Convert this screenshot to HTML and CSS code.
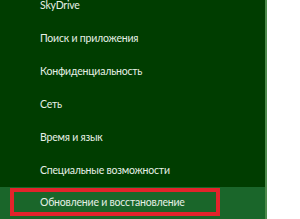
FILE: index.html
```
<!DOCTYPE html>
<html lang="ru">
<head>
    <meta charset="UTF-8">
    <title>Параметры ПК</title>
    <link rel="stylesheet" href="styles.css">
</head>
<body>
    <div class="menu">
        <ul class="items">
            <li>SkyDrive</li>
            <li>Поиск и приложения</li>
            <li>Конфиденциальность</li>
            <li>Сеть</li>
            <li>Время и язык</li>
            <li>Специальные возможности</li>
            <li class="active"><span class="mark">Обновление и восстановление</span></li>
        </ul>
    </div>
</body>
</html>
```

FILE: styles.css
```
body {
    margin: 0;
    background-color: white;
    font-family: Lato, "Noto Sans", sans-serif;
    overflow: hidden;
}
.menu {
    width: 265px;
    height: 219px;
    background-color: #003d00;
    border-right: 2px solid #4b8a4b;
    overflow: hidden;
}
.items {
    list-style: none;
    margin: -11px 0 0 0;
    padding: 0;
}
.items li {
    height: 33px;
    line-height: 33px;
    padding-left: 40px;
    color: #e6f0e6;
    font-size: 10.5px;
    letter-spacing: -0.2px;
    white-space: nowrap;
}
.items li.active {
    background-color: #1a662a;
    padding-left: 10px;
    padding-top: 1px;
    height: 32px;
}
.mark {
    display: inline-block;
    box-sizing: border-box;
    width: 210px;
    height: 28px;
    line-height: 20px;
    padding-left: 26px;
    border: 4px solid #e3232b;
    vertical-align: top;
}
```
